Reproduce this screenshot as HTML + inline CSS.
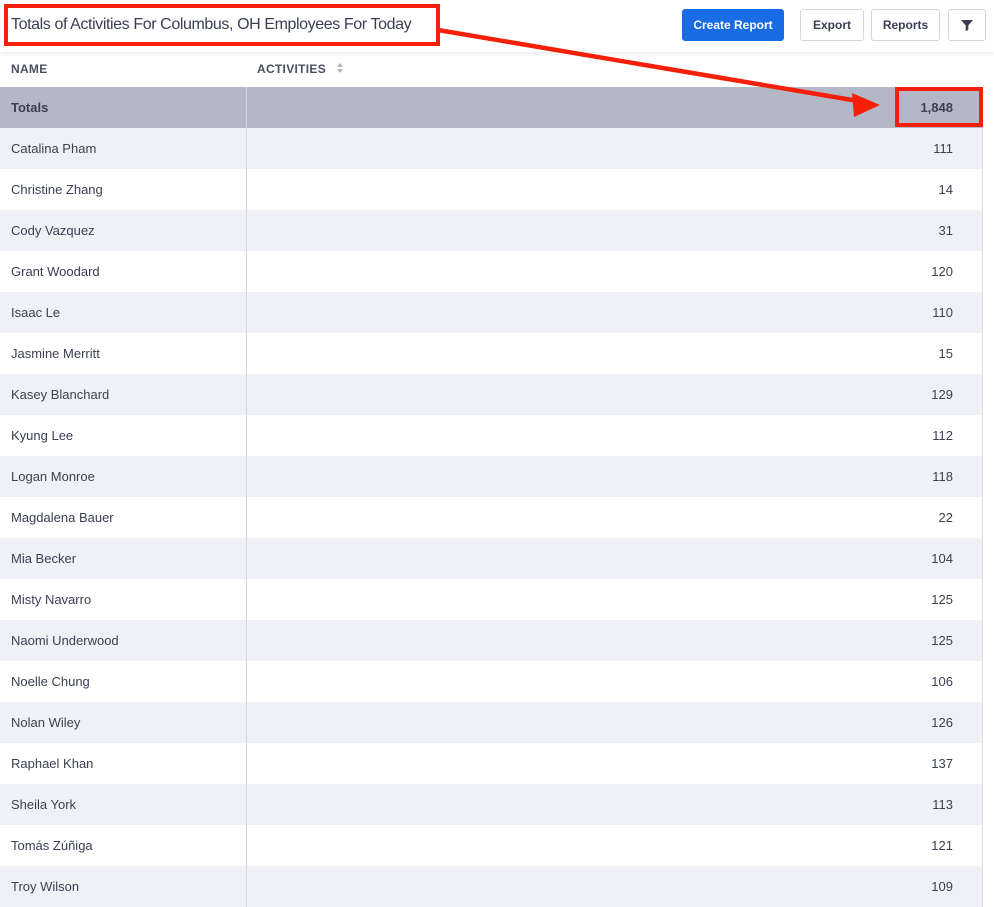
<!DOCTYPE html>
<html><head><meta charset="utf-8"><style>
*{margin:0;padding:0;box-sizing:border-box}
body{width:994px;height:906px;overflow:hidden;background:#fff;font-family:"Liberation Sans",sans-serif;color:#3a3f52;position:relative}
.hdr{position:absolute;left:0;top:0;width:994px;height:52px;background:#fff;box-shadow:0 2px 4px rgba(0,0,0,0.08);z-index:2}
.title{position:absolute;left:4px;top:4px;width:436px;height:42px;border:4px solid #f5200a;font-size:16px;line-height:34px;padding-left:3px;color:#3a3f52;letter-spacing:-0.4px;white-space:nowrap;overflow:hidden}
.btn{position:absolute;top:9px;height:32px;border:1px solid #d4d6dd;border-radius:3px;font-size:12px;font-weight:bold;line-height:30px;text-align:center;color:#3a3f52;background:#fff}
.btn.p{background:#1a6be6;border-color:#1a6be6;color:#fff}
.colh{position:absolute;top:52px;height:35px;line-height:35px;font-size:12px;font-weight:bold;color:#4a4f62;letter-spacing:0.3px}
.row{position:absolute;left:0;width:983px;height:41px;font-size:13px;line-height:41px;border-right:1px solid #dfe1e8}
.row .n{position:absolute;left:11px}
.row .v{position:absolute;right:29px}
.row .d{position:absolute;left:246px;top:0;width:1px;height:41px;background:#d4d6e0}
.alt{background:#f0f1f6}
.tot{background:#b4b7c6;font-weight:bold}
</style></head><body>
<div class="hdr">
<div class="title">Totals of Activities For Columbus, OH Employees For Today</div>
<div class="btn p" style="left:682px;width:102px">Create Report</div>
<div class="btn" style="left:800px;width:64px">Export</div>
<div class="btn" style="left:871px;width:69px">Reports</div>
<div class="btn" style="left:948px;width:38px"><svg width="12" height="12" viewBox="0 0 12 12" style="margin-top:9px"><path d="M0 1h12L7.3 6.5V11L4.7 12V6.5z" fill="#3a3f52"/></svg></div>
</div>
<div class="colh" style="left:11px">NAME</div>
<div class="colh" style="left:257px">ACTIVITIES <svg width="8" height="12" viewBox="0 0 8 12" style="margin-left:6px;vertical-align:-1px"><path d="M4 1L7 5H1zM4 11L1 7h6z" fill="#b0b3c0"/></svg></div>
<div class="row tot" style="top:87px"><span class="n">Totals</span><span class="d"></span><span class="v">1,848</span></div>
<div class="row alt" style="top:128px"><span class="n">Catalina Pham</span><span class="d"></span><span class="v">111</span></div>
<div class="row" style="top:169px"><span class="n">Christine Zhang</span><span class="d"></span><span class="v">14</span></div>
<div class="row alt" style="top:210px"><span class="n">Cody Vazquez</span><span class="d"></span><span class="v">31</span></div>
<div class="row" style="top:251px"><span class="n">Grant Woodard</span><span class="d"></span><span class="v">120</span></div>
<div class="row alt" style="top:292px"><span class="n">Isaac Le</span><span class="d"></span><span class="v">110</span></div>
<div class="row" style="top:333px"><span class="n">Jasmine Merritt</span><span class="d"></span><span class="v">15</span></div>
<div class="row alt" style="top:374px"><span class="n">Kasey Blanchard</span><span class="d"></span><span class="v">129</span></div>
<div class="row" style="top:415px"><span class="n">Kyung Lee</span><span class="d"></span><span class="v">112</span></div>
<div class="row alt" style="top:456px"><span class="n">Logan Monroe</span><span class="d"></span><span class="v">118</span></div>
<div class="row" style="top:497px"><span class="n">Magdalena Bauer</span><span class="d"></span><span class="v">22</span></div>
<div class="row alt" style="top:538px"><span class="n">Mia Becker</span><span class="d"></span><span class="v">104</span></div>
<div class="row" style="top:579px"><span class="n">Misty Navarro</span><span class="d"></span><span class="v">125</span></div>
<div class="row alt" style="top:620px"><span class="n">Naomi Underwood</span><span class="d"></span><span class="v">125</span></div>
<div class="row" style="top:661px"><span class="n">Noelle Chung</span><span class="d"></span><span class="v">106</span></div>
<div class="row alt" style="top:702px"><span class="n">Nolan Wiley</span><span class="d"></span><span class="v">126</span></div>
<div class="row" style="top:743px"><span class="n">Raphael Khan</span><span class="d"></span><span class="v">137</span></div>
<div class="row alt" style="top:784px"><span class="n">Sheila York</span><span class="d"></span><span class="v">113</span></div>
<div class="row" style="top:825px"><span class="n">Tomás Zúñiga</span><span class="d"></span><span class="v">121</span></div>
<div class="row alt" style="top:866px"><span class="n">Troy Wilson</span><span class="d"></span><span class="v">109</span></div>
<div style="position:absolute;left:895px;top:87px;width:88px;height:40px;border:4px solid #f5200a;z-index:3"></div>
<svg width="994" height="906" style="position:absolute;left:0;top:0;z-index:4;pointer-events:none">
<line x1="438" y1="30" x2="858" y2="101" stroke="#f5200a" stroke-width="4.5"/>
<path d="M880 105L852 93L854 117z" fill="#f5200a"/>
</svg>
</body></html>
